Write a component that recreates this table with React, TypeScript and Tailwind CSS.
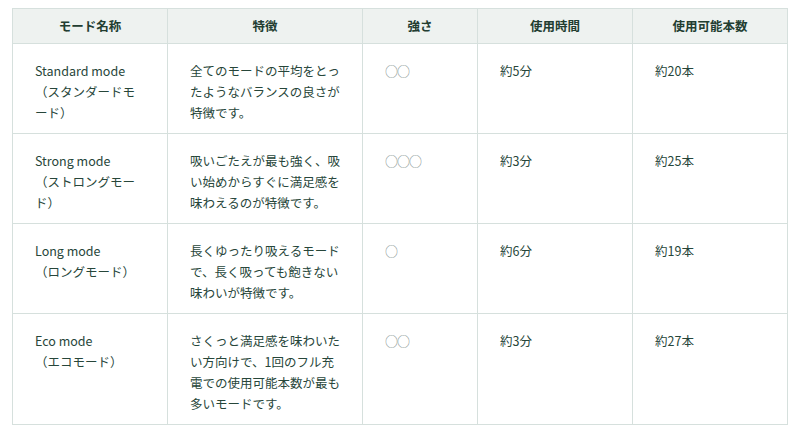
const headers = ['モード名称', '特徴', '強さ', '使用時間', '使用可能本数']

const rows = [
  {
    name: 'Standard mode',
    kana: '（スタンダードモード）',
    feature: '全てのモードの平均をとったようなバランスの良さが特徴です。',
    power: '○○',
    time: '約5分',
    count: '約20本',
  },
  {
    name: 'Strong mode',
    kana: '（ストロングモード）',
    feature: '吸いごたえが最も強く、吸い始めからすぐに満足感を味わえるのが特徴です。',
    power: '○○○',
    time: '約3分',
    count: '約25本',
  },
  {
    name: 'Long mode',
    kana: '（ロングモード）',
    feature: '長くゆったり吸えるモードで、長く吸っても飽きない味わいが特徴です。',
    power: '○',
    time: '約6分',
    count: '約19本',
  },
  {
    name: 'Eco mode',
    kana: '（エコモード）',
    feature: 'さくっと満足感を味わいたい方向けで、1回のフル充電での使用可能本数が最も多いモードです。',
    power: '○○',
    time: '約3分',
    count: '約27本',
  },
]

const cell = 'border border-[#d6e0dd] align-top px-[22px] pt-4 pb-[10px] leading-[21px]'

export default function App() {
  return (
    <div
      className="min-h-[437px] bg-white pt-2 pl-3 text-[12.5px] text-[#27463a]"
      style={{ fontFamily: '"Noto Sans CJK JP", "Noto Sans", sans-serif' }}
    >
      <table className="w-[775px] table-fixed border-collapse">
        <colgroup>
          <col className="w-[155px]" />
          <col className="w-[195px]" />
          <col className="w-[115px]" />
          <col className="w-[155px]" />
          <col className="w-[155px]" />
        </colgroup>
        <thead>
          <tr className="h-[35px] bg-[#eef2f0]">
            {headers.map((h) => (
              <th key={h} className="border border-[#d6e0dd] text-center font-bold text-[#223d31]">
                {h}
              </th>
            ))}
          </tr>
        </thead>
        <tbody>
          {rows.map((r) => (
            <tr key={r.name}>
              <td className={cell}>
                {r.name}
                <br />
                {r.kana}
              </td>
              <td className={cell}>{r.feature}</td>
              <td className={cell}>
                <span className="text-[13px] tracking-[-1px] text-[#84938f]">{r.power}</span>
              </td>
              <td className={cell}>{r.time}</td>
              <td className={cell}>{r.count}</td>
            </tr>
          ))}
        </tbody>
      </table>
    </div>
  )
}
